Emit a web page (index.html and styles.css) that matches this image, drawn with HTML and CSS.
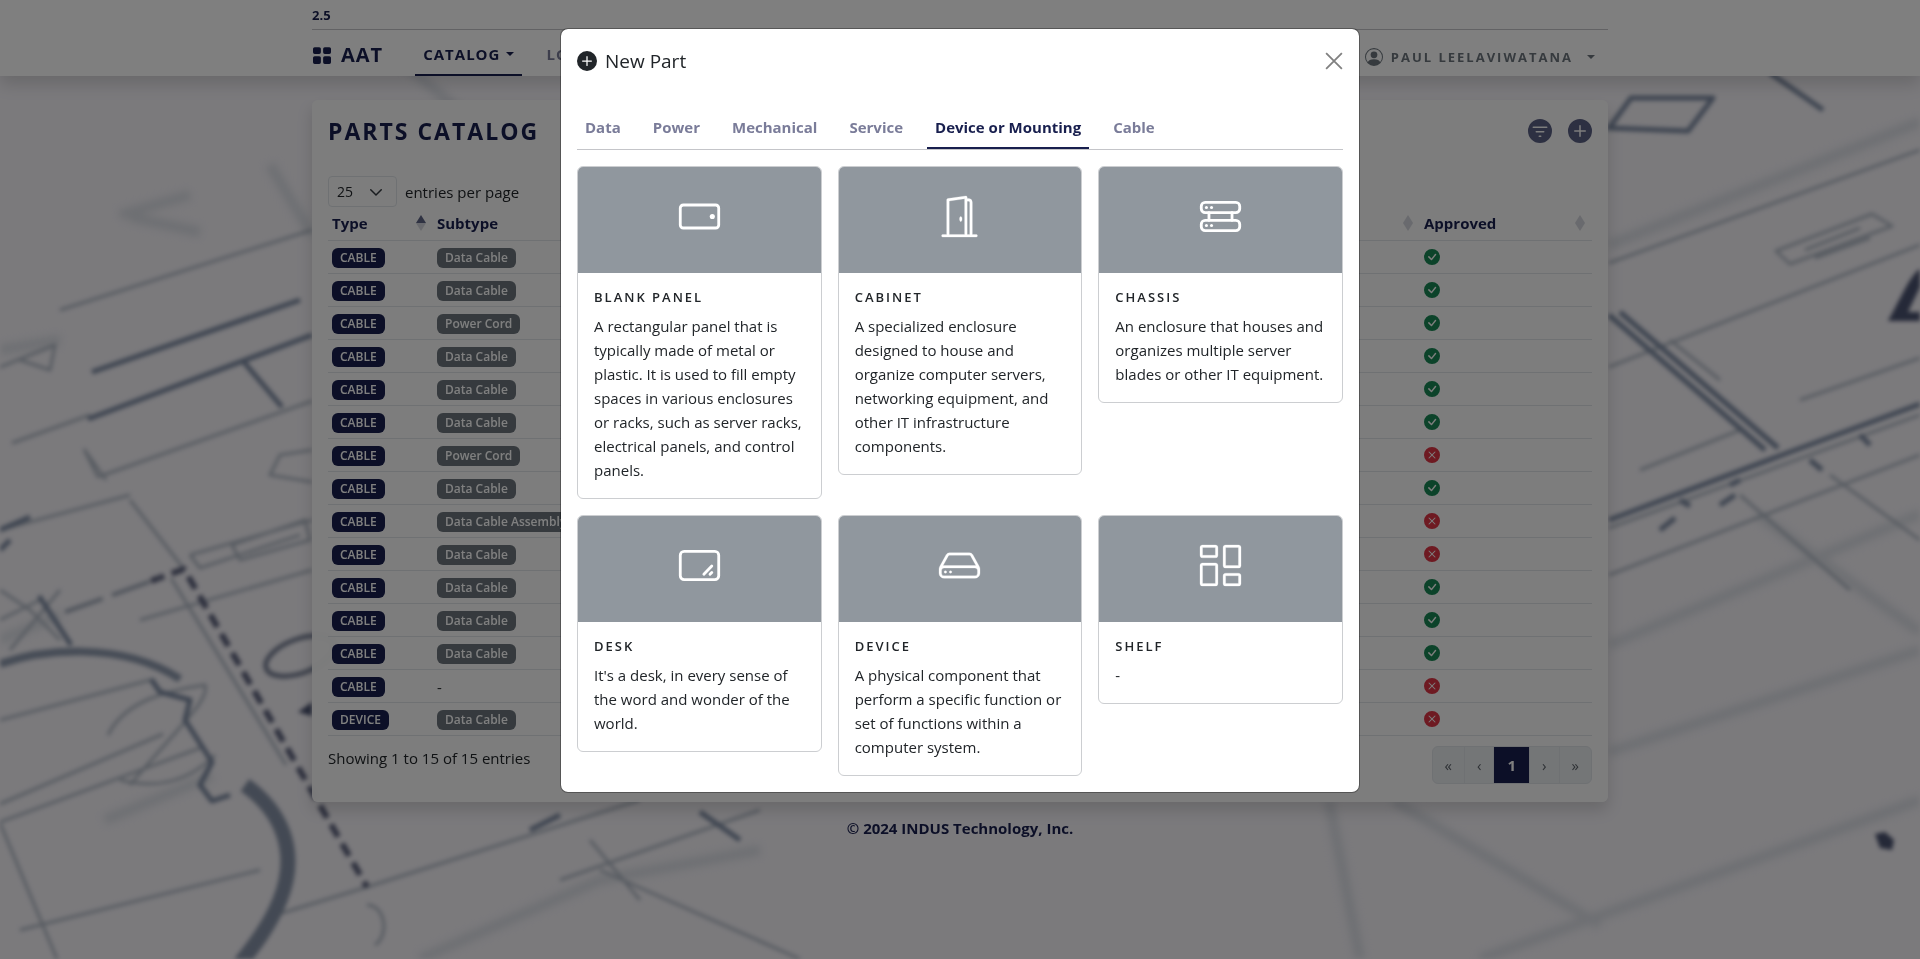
FILE: index.html
```
<!DOCTYPE html>
<html lang="en">
<head>
<meta charset="utf-8">
<meta name="viewport" content="width=device-width, initial-scale=1">
<title>AAT - Parts Catalog</title>
<link rel="stylesheet" href="styles.css">
</head>
<body>
<svg class="symbols" aria-hidden="true">
  <symbol id="check" viewBox="0 0 16 16"><path d="M16 8A8 8 0 1 1 0 8a8 8 0 0 1 16 0m-3.97-3.03a.75.75 0 0 0-1.08.022L7.477 9.417 5.384 7.323a.75.75 0 0 0-1.06 1.06L6.97 11.03a.75.75 0 0 0 1.079-.02l3.992-4.99a.75.75 0 0 0-.01-1.05z"/></symbol>
  <symbol id="cross" viewBox="0 0 16 16"><path d="M16 8A8 8 0 1 1 0 8a8 8 0 0 1 16 0M5.354 4.646a.5.5 0 1 0-.708.708L7.293 8l-2.647 2.646a.5.5 0 0 0 .708.708L8 8.707l2.646 2.647a.5.5 0 0 0 .708-.708L8.707 8l2.647-2.646a.5.5 0 0 0-.708-.708L8 7.293z"/></symbol>
  <symbol id="plus" viewBox="0 0 16 16"><path d="M16 8A8 8 0 1 1 0 8a8 8 0 0 1 16 0M8.5 4.5a.5.5 0 0 0-1 0v3h-3a.5.5 0 0 0 0 1h3v3a.5.5 0 0 0 1 0v-3h3a.5.5 0 0 0 0-1h-3z"/></symbol>
  <symbol id="sort" viewBox="0 0 10 16"><path class="sort-up" d="M5 0 10 8H0z"/><path class="sort-down" d="M0 8h10L5 16z"/></symbol>
</svg>

<svg class="blueprint" viewBox="0 0 1920 959" preserveAspectRatio="xMidYMid slice" aria-hidden="true">
  <g class="bp-wide">
    <path d="M1609 245 1920 122M1609 645 1920 514M1609 752 1920 650M1360 959 1329 801M1394 801 1600 925M1757 514 1920 632M0 350 60 340M120 215 190 195M130 217 200 232M270 165 312 235M400 60 470 120M1480 959 1920 800M0 640 60 615M105 820 212 776M420 959 600 880 760 850"/>
  </g>
  <g class="bp-thin">
    <path d="M98 477 312 401M12 443 90 415M84 449 106 480M84 449 98 477M60 310 312 230M0 367 55 345 50 370 20 360M0 530 130 495M130 500 184 569M171 578 286 765M140 620 312 570M190 555 312 520M190 555 200 568 300 535M0 720 150 680M0 804 163 734M0 822 200 748M0 823 57 959M20 930 260 870M269 917 367 887 640 800M367 905C385 905 390 935 375 945M108 735C125 700 170 690 205 685 210 700 180 725 130 785M120 780C160 790 190 780 215 755M312 450 280 455 270 475 312 482M232 545 305 520 310 540 240 560zM0 590 30 610 60 640M0 620 40 600M10 650 60 590M1609 263 1920 150M1609 367 1920 245M1609 528 1920 415M1609 575 1920 455M1776 251 1872 214 1892 226 1790 264zM1805 250 1860 228M1815 258 1870 238M1640 470 1740 430M1800 400 1920 358M1740 495 1850 590M1830 475 1920 540M560 880 760 810M590 840 640 900M600 870 800 959M1670 340 1720 380"/>
  </g>
  <g class="bp-line">
    <path d="M92 372 300 300M88 419 312 335M243 361 282 407M39 596 71 645M151 679 160 692 190 700 185 720 212 762 200 785 212 801 230 795M1770 73 1823 110M1609 128 1631 98 1713 98 1688 131zM1609 315 1765 450M1620 312 1778 448M1609 520 1790 452 1920 404M1660 530 1675 518M1720 505 1735 495M1730 485 1740 480M1680 500 1690 506M1810 460 1822 470M1860 435 1870 445M0 530 30 517M0 550 10 540M700 812 740 840M530 830 560 815"/>
  </g>
  <path class="bp-arc" d="M0 664C40 650 120 640 180 679"/>
  <ellipse class="bp-ring" cx="300" cy="656" rx="36" ry="17" transform="rotate(-20 300 656)"/>
  <path class="bp-dash" d="M151 581 184 569 367 887"/>
  <path class="bp-dash bp-dash-long" d="M65 612 160 578"/>
  <path class="bp-wall" d="M245 785C280 810 300 850 280 900 270 925 255 945 235 970"/>
  <path class="bp-solid" d="M1888 321C1900 300 1910 275 1920 269v18L1908 312l12 0v9zM298 712l14-10v14zM1875 834l10-2 9 8-2 10-12 -2z"/>
</svg>

<header class="topbar">
  <div class="container">
    <div class="version">2.5</div>
    <nav class="nav">
      <a class="brand" href="#">
        <svg class="brand-icon" viewBox="0 0 16 16"><path d="M0 2.500A1.500 1.500 0 0 1 1.500 1h4A1.500 1.500 0 0 1 7 2.500v3A1.500 1.500 0 0 1 5.500 7h-4A1.500 1.500 0 0 1 0 5.500zM9 2.500A1.500 1.500 0 0 1 10.500 1h4A1.500 1.500 0 0 1 16 2.500v3A1.500 1.500 0 0 1 14.500 7h-4A1.500 1.500 0 0 1 9 5.500zM0 10.500A1.500 1.500 0 0 1 1.500 9h4A1.500 1.500 0 0 1 7 10.500v4A1.500 1.500 0 0 1 5.500 16h-4A1.500 1.500 0 0 1 0 14.500zM9 10.500A1.500 1.500 0 0 1 10.500 9h4a1.500 1.500 0 0 1 1.500 1.500v4a1.500 1.500 0 0 1-1.500 1.500h-4A1.500 1.500 0 0 1 9 14.500z"/></svg>
        AAT
      </a>
      <a class="nav-link active caret" href="#">CATALOG</a>
      <a class="nav-link" href="#">LOCATIONS</a>
      <button class="user caret" type="button">
        <svg class="user-icon" viewBox="0 0 16 16"><path d="M11 6a3 3 0 1 1-6 0 3 3 0 0 1 6 0"/><path fill-rule="evenodd" d="M0 8a8 8 0 1 1 16 0A8 8 0 0 1 0 8m8-7a7 7 0 0 0-5.468 11.370C3.242 11.226 4.805 10 8 10s4.757 1.225 5.468 2.370A7 7 0 0 0 8 1"/></svg>
        PAUL LEELAVIWATANA
      </button>
    </nav>
  </div>
</header>

<main class="container">
  <section class="panel">
    <div class="panel-head">
      <h1 class="panel-title">PARTS CATALOG</h1>
      <button class="round-btn" type="button" aria-label="Filter"><svg viewBox="0 0 16 16"><path fill-rule="evenodd" d="M8 16A8 8 0 1 0 8 0a8 8 0 0 0 0 16M3.500 5h9a.5.5 0 0 1 0 1h-9a.5.5 0 0 1 0-1M5 8.500a.5.5 0 0 1 .5-.5h5a.5.5 0 0 1 0 1h-5a.5.5 0 0 1-.5-.5m2 3a.5.5 0 0 1 .5-.5h1a.5.5 0 0 1 0 1h-1a.5.5 0 0 1-.5-.5"/></svg></button>
      <button class="round-btn" type="button" aria-label="Add part"><svg><use href="#plus"/></svg></button>
    </div>
    <div class="length">
      <select id="page-size" class="select"><option>25</option></select>
      <label for="page-size">entries per page</label>
    </div>
    <table class="parts">
      <colgroup><col class="col-type"><col class="col-subtype"><col><col class="col-approved"></colgroup>
      <thead>
        <tr>
          <th><div class="th asc">Type<svg class="sort"><use href="#sort"/></svg></div></th>
          <th><div class="th">Subtype<svg class="sort"><use href="#sort"/></svg></div></th>
          <th><div class="th">Name<svg class="sort"><use href="#sort"/></svg></div></th>
          <th><div class="th">Approved<svg class="sort"><use href="#sort"/></svg></div></th>
        </tr>
      </thead>
      <tbody>
        <tr><td><span class="badge">CABLE</span></td><td><span class="badge sub">Data Cable</span></td><td></td><td><svg class="state ok"><use href="#check"/></svg></td></tr>
        <tr><td><span class="badge">CABLE</span></td><td><span class="badge sub">Data Cable</span></td><td></td><td><svg class="state ok"><use href="#check"/></svg></td></tr>
        <tr><td><span class="badge">CABLE</span></td><td><span class="badge sub">Power Cord</span></td><td></td><td><svg class="state ok"><use href="#check"/></svg></td></tr>
        <tr><td><span class="badge">CABLE</span></td><td><span class="badge sub">Data Cable</span></td><td></td><td><svg class="state ok"><use href="#check"/></svg></td></tr>
        <tr><td><span class="badge">CABLE</span></td><td><span class="badge sub">Data Cable</span></td><td></td><td><svg class="state ok"><use href="#check"/></svg></td></tr>
        <tr><td><span class="badge">CABLE</span></td><td><span class="badge sub">Data Cable</span></td><td></td><td><svg class="state ok"><use href="#check"/></svg></td></tr>
        <tr><td><span class="badge">CABLE</span></td><td><span class="badge sub">Power Cord</span></td><td></td><td><svg class="state no"><use href="#cross"/></svg></td></tr>
        <tr><td><span class="badge">CABLE</span></td><td><span class="badge sub">Data Cable</span></td><td></td><td><svg class="state ok"><use href="#check"/></svg></td></tr>
        <tr><td><span class="badge">CABLE</span></td><td><span class="badge sub">Data Cable Assembly</span></td><td></td><td><svg class="state no"><use href="#cross"/></svg></td></tr>
        <tr><td><span class="badge">CABLE</span></td><td><span class="badge sub">Data Cable</span></td><td></td><td><svg class="state no"><use href="#cross"/></svg></td></tr>
        <tr><td><span class="badge">CABLE</span></td><td><span class="badge sub">Data Cable</span></td><td></td><td><svg class="state ok"><use href="#check"/></svg></td></tr>
        <tr><td><span class="badge">CABLE</span></td><td><span class="badge sub">Data Cable</span></td><td></td><td><svg class="state ok"><use href="#check"/></svg></td></tr>
        <tr><td><span class="badge">CABLE</span></td><td><span class="badge sub">Data Cable</span></td><td></td><td><svg class="state ok"><use href="#check"/></svg></td></tr>
        <tr><td><span class="badge">CABLE</span></td><td>-</td><td></td><td><svg class="state no"><use href="#cross"/></svg></td></tr>
        <tr><td><span class="badge">DEVICE</span></td><td><span class="badge sub">Data Cable</span></td><td></td><td><svg class="state no"><use href="#cross"/></svg></td></tr>
      </tbody>
    </table>
    <div class="panel-foot">
      <div>Showing 1 to 15 of 15 entries</div>
      <nav class="pager" aria-label="Pages">
        <button type="button">«</button><button type="button">‹</button><button type="button" class="current">1</button><button type="button">›</button><button type="button">»</button>
      </nav>
    </div>
  </section>
</main>
<footer class="footer">© 2024 INDUS Technology, Inc.</footer>

<div class="overlay">
  <div class="modal" role="dialog" aria-modal="true" aria-labelledby="modal-title">
    <div class="modal-head">
      <svg class="modal-icon"><use href="#plus"/></svg>
      <h2 class="modal-title" id="modal-title">New Part</h2>
      <button class="close" type="button" aria-label="Close"><svg viewBox="0 0 16 16"><path d="M1 1 15 15M15 1 1 15"/></svg></button>
    </div>
    <div class="tabs" role="tablist">
      <button class="tab" type="button" role="tab">Data</button>
      <button class="tab" type="button" role="tab">Power</button>
      <button class="tab" type="button" role="tab">Mechanical</button>
      <button class="tab" type="button" role="tab">Service</button>
      <button class="tab selected" type="button" role="tab" aria-selected="true">Device or Mounting</button>
      <button class="tab" type="button" role="tab">Cable</button>
    </div>
    <div class="cards">
      <article class="card">
        <div class="card-art"><svg class="outline" viewBox="0 0 16 16"><rect x=".5" y="3.500" width="15" height="9" rx="1.200"/><circle class="dot" cx="13" cy="8" r="1"/></svg></div>
        <div class="card-body"><h3 class="card-title">BLANK PANEL</h3><p class="card-text">A rectangular panel that is typically made of metal or plastic. It is used to fill empty spaces in various enclosures or racks, such as server racks, electrical panels, and control panels.</p></div>
      </article>
      <article class="card">
        <div class="card-art"><svg class="solid" viewBox="0 0 16 16"><path d="M8.500 10c-.276 0-.5-.448-.5-1s.224-1 .5-1 .5.448.5 1-.224 1-.5 1"/><path d="M10.828.122A.5.5 0 0 1 11 .5V1h.5A1.500 1.500 0 0 1 13 2.500V15h1.500a.5.5 0 0 1 0 1h-13a.5.5 0 0 1 0-1H3V1.500a.5.5 0 0 1 .43-.495l7-1a.5.5 0 0 1 .398.117M11.500 2H11v13h1V2.500a.5.5 0 0 0-.5-.5M4 1.934V15h6V1.077z"/></svg></div>
        <div class="card-body"><h3 class="card-title">CABINET</h3><p class="card-text">A specialized enclosure designed to house and organize computer servers, networking equipment, and other IT infrastructure components.</p></div>
      </article>
      <article class="card">
        <div class="card-art"><svg class="outline" viewBox="0 0 16 16"><rect x=".5" y="2.500" width="15" height="4" rx="1.500"/><rect x=".5" y="9.500" width="15" height="4" rx="1.500"/><path d="M3.500 6.500v3M12.500 6.500v3"/><g class="dot"><circle cx="2.500" cy="4.500" r=".6"/><circle cx="4.500" cy="4.500" r=".6"/><circle cx="2.500" cy="11.500" r=".6"/><circle cx="4.500" cy="11.500" r=".6"/></g></svg></div>
        <div class="card-body"><h3 class="card-title">CHASSIS</h3><p class="card-text">An enclosure that houses and organizes multiple server blades or other IT equipment.</p></div>
      </article>
      <article class="card">
        <div class="card-art"><svg class="outline" viewBox="0 0 16 16"><rect x=".5" y="2.500" width="15" height="11" rx="1.500"/><path d="M9.700 11.400 12.800 8.200M12.100 11.400 12.800 10.700"/></svg></div>
        <div class="card-body"><h3 class="card-title">DESK</h3><p class="card-text">It's a desk, in every sense of the word and wonder of the world.</p></div>
      </article>
      <article class="card">
        <div class="card-art"><svg class="solid" viewBox="0 0 16 16"><path d="M4.500 11a.5.5 0 1 0 0-1 .5.5 0 0 0 0 1M3 10.500a.5.5 0 1 1-1 0 .5.5 0 0 1 1 0"/><path d="M16 11a2 2 0 0 1-2 2H2a2 2 0 0 1-2-2V9.510c0-.418.105-.83.305-1.197l2.472-4.531A1.500 1.500 0 0 1 4.094 3h7.812a1.500 1.500 0 0 1 1.317.782l2.472 4.530c.2.368.305.78.305 1.198zM3.655 4.260 1.592 8.043Q1.790 8 2 8h12q.21 0 .408.042L12.345 4.260a.5.5 0 0 0-.439-.26H4.094a.5.5 0 0 0-.44.26zM1 10v1a1 1 0 0 0 1 1h12a1 1 0 0 0 1-1v-1a1 1 0 0 0-1-1H2a1 1 0 0 0-1 1"/></svg></div>
        <div class="card-body"><h3 class="card-title">DEVICE</h3><p class="card-text">A physical component that perform a specific function or set of functions within a computer system.</p></div>
      </article>
      <article class="card">
        <div class="card-art"><svg class="solid" viewBox="0 0 16 16"><path d="M6 1v3H1V1zM1 0a1 1 0 0 0-1 1v3a1 1 0 0 0 1 1h5a1 1 0 0 0 1-1V1a1 1 0 0 0-1-1zm14 12v3h-5v-3zm-5-1a1 1 0 0 0-1 1v3a1 1 0 0 0 1 1h5a1 1 0 0 0 1-1v-3a1 1 0 0 0-1-1zM6 8v7H1V8zM1 7a1 1 0 0 0-1 1v7a1 1 0 0 0 1 1h5a1 1 0 0 0 1-1V8a1 1 0 0 0-1-1zm14-6v7h-5V1zm-5-1a1 1 0 0 0-1 1v7a1 1 0 0 0 1 1h5a1 1 0 0 0 1-1V1a1 1 0 0 0-1-1z"/></svg></div>
        <div class="card-body"><h3 class="card-title">SHELF</h3><p class="card-text">-</p></div>
      </article>
    </div>
  </div>
</div>
</body>
</html>
```
FILE: styles.css
```
:root {
  --navy: #181f4e;
  --ink: #212529;
  --muted: #7a7c99;
  --line: #dee2e6;
}
* { box-sizing: border-box; }
body {
  margin: 0;
  min-height: 100vh;
  background: #f6f4f9;
  color: var(--ink);
  font: 15px/24px "Segoe UI", "Open Sans", "Noto Sans", sans-serif;
}
h1, h2, h3, p { margin: 0; }
button { font: inherit; color: inherit; background: none; border: 0; padding: 0; }
svg { display: block; fill: currentColor; }
a { color: inherit; text-decoration: none; }
.symbols { position: absolute; width: 0; height: 0; }

.blueprint { position: fixed; inset: 0; width: 100%; height: 100%; z-index: -1; fill: none; stroke-linejoin: round; filter: blur(2px); }
.bp-wide { stroke: #dcdfe6; stroke-width: 10; filter: blur(3px); }
.bp-thin { stroke: #b0b8c4; stroke-width: 3; }
.bp-line { stroke: #7c8aa2; stroke-width: 5; }
.bp-arc { stroke: #8d99ad; stroke-width: 8; }
.bp-ring { stroke: #7b8398; stroke-width: 5; }
.bp-dash { stroke: #5c617c; stroke-width: 6; stroke-dasharray: 14 8; }
.bp-dash-long { stroke: #a0a9b8; stroke-width: 4; stroke-dasharray: 40 10; }
.bp-wall { stroke: #8793a8; stroke-width: 15; }
.bp-solid { fill: #4a5270; }

.container { width: 100%; max-width: 1320px; margin: 0 auto; padding: 0 12px; }
.topbar { background: #fffffff5; box-shadow: 0 8px 16px #00000026; }
.version { height: 30px; padding-top: 3px; border-bottom: 1px solid #c4c5c9; font-size: 13px; font-weight: 700; color: var(--navy); }
.nav { display: flex; align-items: stretch; height: 46px; color: var(--navy); }
.brand { display: flex; align-items: center; gap: 10px; margin-right: 32px; padding-top: 4px; font-size: 20px; font-weight: 700; letter-spacing: 1px; }
.brand-icon { width: 18px; height: 18px; margin-left: 1px; }
.nav-link { display: flex; align-items: center; margin-right: 16px; padding: 4px 8px 0; border-bottom: 2px solid transparent; font-weight: 700; letter-spacing: 1px; color: var(--muted); }
.nav-link.active { border-color: var(--navy); color: var(--navy); }
.caret::after { content: ""; margin-left: 6px; border: 4px solid transparent; border-top-color: currentColor; border-bottom: 0; }
.user { display: flex; align-items: center; gap: 8px; margin-left: auto; padding: 8px 13px 0 0; font-size: 13px; font-weight: 700; letter-spacing: 2px; color: #6c757d; }
.user-icon { width: 18px; height: 18px; }

.panel { margin-top: 24px; padding: 16px 16px 18px; border-radius: 6px; background: #fafafaf8; box-shadow: 0 8px 16px #00000026; }
.panel-head { display: flex; align-items: center; gap: 16px; height: 30px; margin-bottom: 30px; color: var(--navy); }
.panel-title { flex: 1; font-size: 23px; line-height: 30px; font-weight: 700; letter-spacing: 2px; }
.round-btn { color: #5b6084; }
.round-btn svg { width: 24px; height: 24px; }
.length { display: flex; align-items: center; gap: 8px; height: 31px; }
.select { appearance: none; width: 69px; height: 31px; padding: 0 8px; border: 1px solid var(--line); border-radius: 4px; color: var(--ink); font: inherit; font-size: 14px; background: no-repeat right 14px center / 12px 12px url("data:image/svg+xml,%3Csvg xmlns='http://www.w3.org/2000/svg' viewBox='0 0 16 16'%3E%3Cpath fill='none' stroke='%23343a40' stroke-linecap='round' stroke-width='2' d='m1 5 7 7 7-7'/%3E%3C/svg%3E"); }
.parts { width: 100%; border-collapse: collapse; table-layout: fixed; }
.col-type { width: 105px; }
.col-subtype { width: 400px; }
.col-approved { width: 172px; }
.parts th, .parts td { height: 33px; padding: 0 4px; border-bottom: 1px solid var(--line); text-align: left; }
.parts td { padding-top: 2px; line-height: 20px; }
.th { display: flex; justify-content: space-between; align-items: center; padding-right: 3px; color: var(--navy); font-weight: 700; }
.sort { width: 10px; height: 16px; color: #5e6485; --up: .25; }
.asc .sort { --up: 1; }
.sort-up { opacity: var(--up); }
.sort-down { opacity: .25; }
.badge { display: inline-block; height: 20px; padding: 0 8px; border-radius: 6px; background: var(--navy); color: #fff; font-size: 12px; line-height: 20px; font-weight: 600; vertical-align: middle; }
.badge.sub { background: #6c757d; }
.state { width: 16px; height: 16px; margin-bottom: 2px; }
.ok { color: #198754; }
.no { color: #dc3545; }
.panel-foot { display: flex; justify-content: space-between; padding-top: 10px; }
.pager { display: flex; height: 38px; border: 1px solid var(--line); border-radius: 6px; overflow: hidden; background: #e9ecef; color: #5d646b; }
.pager button { padding: 0 12px; border-right: 1px solid var(--line); font-size: 15px; }
.pager button:last-child { border-right: 0; }
.pager .current { padding: 0 13px; background: var(--navy); color: #fff; font-weight: 700; }
.footer { padding: 14px 0; text-align: center; font-weight: 700; color: var(--navy); }

.overlay { position: fixed; inset: 0; overflow: auto; padding: 28px 16px; background: #00000080; }
.modal { max-width: 800px; margin: 0 auto; border: 1px solid #00000050; border-radius: 8px; background: #fff; background-clip: padding-box; }
.modal-head { display: flex; align-items: center; gap: 8px; height: 64px; padding: 0 16px; }
.modal-icon { width: 20px; height: 20px; }
.modal-title { flex: 1; font-size: 19px; line-height: 30px; font-weight: 500; }
.close { color: #808080; }
.close svg { width: 18px; height: 18px; fill: none; stroke: currentColor; stroke-width: 1.6; }
.tabs { display: flex; gap: 16px; height: 57px; margin: 0 16px; border-bottom: 1px solid #c4c5c9; align-items: flex-end; }
.tab { height: 40px; padding: 0 8px 2px; border-bottom: 2px solid transparent; color: var(--muted); font-weight: 700; }
.tab.selected { border-color: var(--navy); color: var(--navy); }
.cards { display: grid; grid-template-columns: repeat(3, 1fr); gap: 16px; align-items: start; padding: 16px; }
.card { overflow: hidden; border: 1px solid #ccced1; border-radius: 6px; }
.card-art { display: grid; place-items: center; height: 106px; padding-bottom: 8px; background: #90979e; color: #fff; }
.card-art svg { width: 41px; height: 41px; overflow: visible; }
.outline { fill: none; stroke: currentColor; stroke-width: 1.1; stroke-linecap: round; }
.solid { stroke: currentColor; stroke-width: .1; }
.dot { fill: currentColor; stroke: none; }
.card-body { padding: 16px; }
.card-title { margin-bottom: 8px; font-size: 13px; line-height: 17px; font-weight: 600; letter-spacing: 2px; }
.card-text { font-weight: 400; }
```
